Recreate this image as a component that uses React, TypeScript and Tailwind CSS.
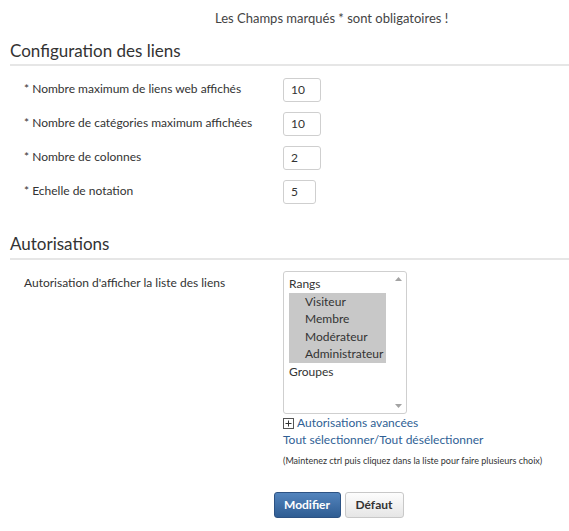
import React from "react";

const font = { fontFamily: "Lato, 'Open Sans', sans-serif" };

function Row({ label, value, w }: { label: string; value: string; w: "w-[38px]" | "w-[33px]" }) {
  return (
    <div className="flex items-center h-[34px]">
      <div className="w-[283px] pl-[24px] text-[12px] text-[#333] -mt-[2px]">{label}</div>
      <div className={`${w} h-[24px] border border-[#cfcfcf] rounded-[3px] bg-white flex items-center pl-[7px] text-[12px] text-[#333]`}>
        {value}
      </div>
    </div>
  );
}

export default function App() {
  return (
    <div className="w-[569px] h-[531px] bg-white text-[#333]" style={font}>
      <div className="pt-[9px] h-[40px] text-[13px] text-[#444] pl-[215px]">Les Champs marqués * sont obligatoires !</div>
      <div className="ml-[10px] border-b-2 border-[#e6e6e6] text-[17px] text-[#333] pb-[2px] leading-[22px]">
        Configuration des liens
      </div>
      <div className="pt-[7px]">
        <Row label="* Nombre maximum de liens web affichés" value="10" w="w-[38px]" />
        <Row label="* Nombre de catégories maximum affichées" value="10" w="w-[38px]" />
        <Row label="* Nombre de colonnes" value="2" w="w-[38px]" />
        <Row label="* Echelle de notation" value="5" w="w-[33px]" />
      </div>
      <div className="ml-[10px] mt-[24px] border-b-2 border-[#e6e6e6] text-[17px] text-[#333] pb-[3px] leading-[22px]">
        Autorisations
      </div>
      <div className="flex mt-[11px]">
        <div className="w-[283px] pl-[24px] text-[12px] text-[#333] pt-[3px]">Autorisation d'afficher la liste des liens</div>
        <div className="flex flex-col">
          <div className="w-[124px] h-[143px] border border-[#cfcfcf] rounded-[3px] bg-white flex">
            <div className="flex-1 pl-[5px] pt-[3px] text-[12px] leading-[17.5px] text-[#333]">
              <div>Rangs</div>
              <div className="bg-[#c8c8c8] w-[97px]">
                <div className="pl-[16px]">Visiteur</div>
                <div className="pl-[16px]">Membre</div>
                <div className="pl-[16px]">Modérateur</div>
                <div className="pl-[16px]">Administrateur</div>
              </div>
              <div>Groupes</div>
            </div>
            <div className="w-[15px] flex flex-col justify-between items-center py-[5px]">
              <svg width="7" height="4" viewBox="0 0 7 4"><path d="M0 4 L3.5 0 L7 4 Z" fill="#a3a3a3" /></svg>
              <svg width="7" height="4" viewBox="0 0 7 4"><path d="M0 0 L3.5 4 L7 0 Z" fill="#a3a3a3" /></svg>
            </div>
          </div>
          <div className="flex items-center mt-[1px] text-[12px] text-[#2f5f95] leading-[16px]">
            <svg width="11" height="11" viewBox="0 0 11 11" className="mr-[3px]">
              <rect x="0.5" y="0.5" width="10" height="10" fill="white" stroke="#555" />
              <path d="M5.5 2.5 V8.5 M2.5 5.5 H8.5" stroke="#333" strokeWidth="1" />
            </svg>
            Autorisations avancées
          </div>
          <div className="text-[12px] text-[#2f5f95] leading-[16px] mt-[1px]">Tout sélectionner/Tout désélectionner</div>
          <div className="text-[9px] text-[#333] mt-[6px] whitespace-nowrap">(Maintenez ctrl puis cliquez dans la liste pour faire plusieurs choix)</div>
        </div>
      </div>
      <div className="flex justify-center gap-[4px] mt-[24px] pl-[108px]">
        <button className="w-[67px] h-[26px] rounded-[3px] border border-[#2c5283] bg-gradient-to-b from-[#5384bd] to-[#2f5d93] text-white font-bold text-[12px]">Modifier</button>
        <button className="w-[59px] h-[26px] rounded-[3px] border border-[#c8c8c8] bg-gradient-to-b from-[#fdfdfd] to-[#e6e6e6] text-[#333] font-bold text-[12px]">Défaut</button>
      </div>
    </div>
  );
}
